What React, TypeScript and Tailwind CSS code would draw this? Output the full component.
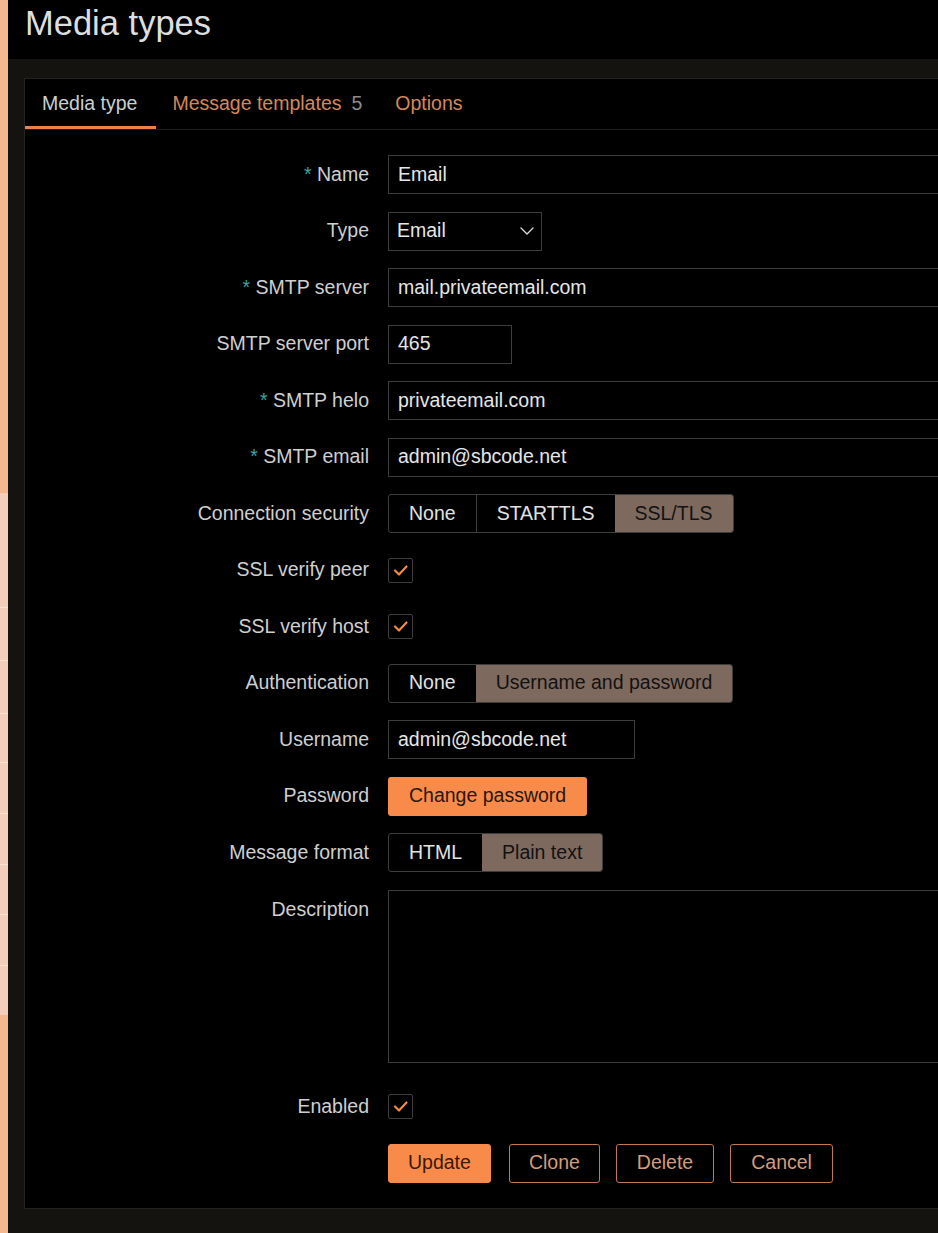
import React from "react";

const Check: React.FC = () => (
  <div className="flex h-[25px] w-[25px] items-center justify-center rounded-[2px] border border-[#3d3d3d]">
    <svg width="17" height="17" viewBox="0 0 17 17" fill="none">
      <polyline
        points="3,8.5 7,12.5 14.5,4.5"
        stroke="#f08a4b"
        strokeWidth="2.2"
        strokeLinecap="round"
        strokeLinejoin="round"
      />
    </svg>
  </div>
);

const Segments: React.FC<{ items: string[]; selected: number }> = ({
  items,
  selected,
}) => (
  <div className="flex h-[39px] overflow-hidden rounded-[3px] border border-[#3d3d3d]">
    {items.map((item, i) => (
      <div
        key={item}
        className={`flex items-center px-[20px] ${
          i === selected
            ? "bg-[#7e695e] text-[#121212]"
            : "text-[#e2e2e2]"
        } ${i < items.length - 1 && i + 1 !== selected ? "border-r border-[#3d3d3d]" : ""}`}
      >
        {item}
      </div>
    ))}
  </div>
);

const Row: React.FC<{
  label: string;
  required?: boolean;
  top?: boolean;
  className?: string;
  children: React.ReactNode;
}> = ({ label, required, top, className, children }) => (
  <div className={`flex gap-[19px] ${top ? "items-start" : "items-center"} ${className ?? ""}`}>
    <div
      className={`w-[344px] shrink-0 text-right text-[#cfcfcf] ${top ? "leading-[39px]" : ""}`}
    >
      {required && <span className="text-[#3aa3a3]">* </span>}
      {label}
    </div>
    {children}
  </div>
);

const Input: React.FC<{ value: string; width: string }> = ({ value, width }) => (
  <div
    className={`flex h-[39px] shrink-0 items-center border border-[#3d3d3d] pl-[9px] text-[#e6e6e6] ${width}`}
  >
    {value}
  </div>
);

const sidebarLines = [608, 661, 714, 763, 814, 865, 915, 966];

export default function App() {
  return (
    <div className="flex h-[1233px] w-[938px] overflow-hidden bg-black font-['Liberation_Sans',Arial,sans-serif] text-[19.5px]">
      {/* sidebar edge */}
      <div className="flex w-[8px] shrink-0 flex-col bg-[#f4b891]">
        <div className="h-[493px]" />
        <div className="flex h-[522px] flex-col bg-[#f3cfbb]">
          {sidebarLines.map((y, i) => (
            <div
              key={y}
              className="border-b border-[#fae2d4]"
              style={{ height: y - (i === 0 ? 493 : sidebarLines[i - 1]) }}
            />
          ))}
        </div>
      </div>

      <div className="flex min-w-0 flex-1 flex-col">
        <header className="flex h-[59px] shrink-0 items-center bg-black pl-[17px]">
          <h1 className="-mt-[12px] text-[34.5px] leading-none text-[#dcdfdf]">Media types</h1>
        </header>

        <div className="flex-1 bg-[#14130f] pl-[16px] pt-[19px]">
          <div className="flex h-[1131px] w-[1000px] flex-col border-y border-l border-[#232323] bg-black">
            {/* tabs */}
            <div className="flex h-[51px] shrink-0 border-b border-[#1f1f1f]">
              <div className="flex items-center border-b-[3px] border-[#f0804a] pl-[17px] pr-[19px] pt-[3px] text-[#c9d0d0]">
                Media type
              </div>
              <div className="flex items-center pl-[16px] pr-[17px] text-[#d4875a]">
                Message templates<span className="ml-[10px] text-[#8c8c8c]">5</span>
              </div>
              <div className="flex items-center px-[16px] text-[#d4875a]">Options</div>
            </div>

            <div className="flex flex-col gap-[17.5px] pt-[25px]">
              <Row label="Name" required>
                <Input value="Email" width="w-[600px]" />
              </Row>
              <Row label="Type">
                <div className="flex h-[39px] w-[154px] items-center justify-between border border-[#3d3d3d] pl-[8px] pr-[6px] text-[#e6e6e6]">
                  Email
                  <svg width="16" height="16" viewBox="0 0 16 16" fill="none">
                    <polyline
                      points="2,5 8,11 14,5"
                      stroke="#d8d8d8"
                      strokeWidth="1.4"
                      strokeLinecap="round"
                      strokeLinejoin="round"
                    />
                  </svg>
                </div>
              </Row>
              <Row label="SMTP server" required>
                <Input value="mail.privateemail.com" width="w-[600px]" />
              </Row>
              <Row label="SMTP server port">
                <Input value="465" width="w-[124px]" />
              </Row>
              <Row label="SMTP helo" required>
                <Input value="privateemail.com" width="w-[600px]" />
              </Row>
              <Row label="SMTP email" required>
                <Input value="admin@sbcode.net" width="w-[600px]" />
              </Row>
              <Row label="Connection security">
                <Segments items={["None", "STARTTLS", "SSL/TLS"]} selected={2} />
              </Row>
              <Row label="SSL verify peer" className="h-[39px]">
                <Check />
              </Row>
              <Row label="SSL verify host" className="h-[39px]">
                <Check />
              </Row>
              <Row label="Authentication">
                <Segments items={["None", "Username and password"]} selected={1} />
              </Row>
              <Row label="Username">
                <Input value="admin@sbcode.net" width="w-[247px]" />
              </Row>
              <Row label="Password">
                <button className="h-[39px] rounded-[3px] bg-[#f88b4a] px-[21px] text-[#2b1608]">
                  Change password
                </button>
              </Row>
              <Row label="Message format">
                <Segments items={["HTML", "Plain text"]} selected={1} />
              </Row>
              <Row label="Description" top>
                <div className="h-[173px] w-[600px] shrink-0 border border-[#3d3d3d]" />
              </Row>
              <Row label="Enabled" className="mt-[7px] h-[39px]">
                <Check />
              </Row>
              <div className="flex gap-[16px] pl-[363px]">
                <button className="mr-[2px] h-[39px] rounded-[3px] border border-[#f88b4a] bg-[#f88b4a] px-[19px] text-[#3a1a08]">
                  Update
                </button>
                <button className="h-[39px] rounded-[3px] border border-[#c47a4e] px-[19px] text-[#d49c78]">
                  Clone
                </button>
                <button className="h-[39px] rounded-[3px] border border-[#c47a4e] px-[20px] text-[#d49c78]">
                  Delete
                </button>
                <button className="h-[39px] rounded-[3px] border border-[#c47a4e] px-[20px] text-[#d49c78]">
                  Cancel
                </button>
              </div>
            </div>
          </div>
        </div>
      </div>
    </div>
  );
}
